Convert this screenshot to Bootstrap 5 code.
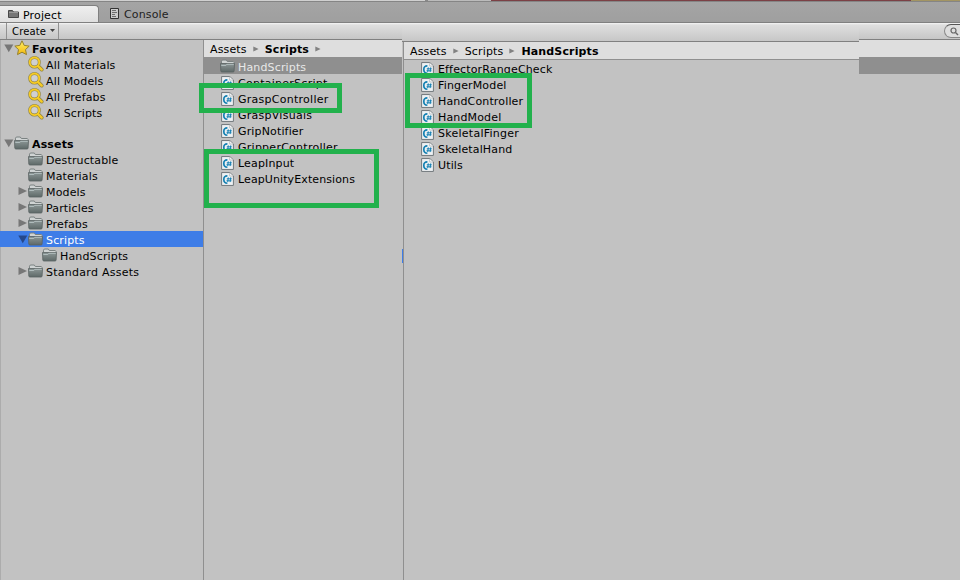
<!DOCTYPE html>
<html lang="en">
<head>
<meta charset="utf-8">
<title>Project</title>
<link href="https://cdn.jsdelivr.net/npm/bootstrap@5.3.0/dist/css/bootstrap.min.css" rel="stylesheet">
<style>
body{width:960px;height:580px;background:#c2c2c2;font:11px/16px "DejaVu Sans",sans-serif;color:#000;letter-spacing:.15px}
svg{flex:none;display:block}
.wide{letter-spacing:.26px}
.tabs{height:23px;background:linear-gradient(#a5a5a5,#9f9f9f);border-bottom:1px solid #808080}
.strip{flex:none;height:2px;border-bottom:1px solid #858585;background:linear-gradient(90deg,#d0d0d0 0 425px,#888 425px 428px,#bbb 428px 491px,#7b4045 491px 911px,#a39563 911px)}
.tab-on{width:99px;height:17px;background:linear-gradient(#efefef,#dfdfdf);border:1px solid #808080;border-width:1px 1px 0 0;border-radius:0 4px 0 0;margin-top:3px}
.tab-on span{padding-top:3px}
.tools{height:17px;background:linear-gradient(#f5f5f5,#dedede 2px,#c6c6c6);border-bottom:1px solid #808080}
.create{margin-left:6px;width:53px;border:1px solid #919191;border-width:0 1px;font-size:10px;padding:1px 3px 0 5px;letter-spacing:.15px}
.create svg{margin-top:5px}
.search{width:30px;height:14px;margin:1px -14px 0 0;border:1px solid #888;border-top-color:#555;border-radius:8px;background:#dedede;padding:2px 5px}
.tree{width:204px;border-right:1px solid #8f8f8f;border-left:1px solid #acacac}
.line{height:16px}
.line span{margin-left:2px;padding-top:3px}
.arrow{width:10px}
.l1{padding-left:3px}.l2{padding-left:17px}.l3{padding-left:31px}
.sel{background:#3e7de7;color:#fff;margin-left:-1px;padding-left:18px}
.gap15{height:15px}
.files{width:198px}
.crumb{background:#dedede;height:17px;padding:2px 0 0 6px}
.crumb svg{margin:0 6px 1px 6px}
.head{height:17px;background:#8f8f8f;color:#e8e8e8;padding-left:16px;margin-bottom:1px}
.file{height:16px;padding-left:17px;gap:4px}
.file span{padding-top:2px}
.inset{width:457px;margin-top:-12px;height:552px;background:#c2c2c2}
.inset-top{height:14px;background:linear-gradient(#dadada,#c7c7c7);border-bottom:1px solid #808080}
.inset-body{margin-left:1px;border-left:1px solid #8f8f8f;height:538px}
.inset .crumb{height:18px;border-bottom:1px solid #8f8f8f}
.mark-box{position:absolute;border:5px solid #22b14c}
.m1{left:199px;top:83px;width:143px;height:30px}
.m2{left:204px;top:149px;width:175px;height:59px}
.m3{left:405px;top:73px;width:127px;height:55px}
.tick{position:absolute;left:402px;top:249px;width:1px;height:14px;background:#3e7de7}
</style>
<script src="https://cdn.jsdelivr.net/npm/bootstrap@5.3.0/dist/js/bootstrap.bundle.min.js"></script>
</head>
<body class="position-relative overflow-hidden text-nowrap">
<svg width="0" height="0" class="position-absolute">
<defs>
<linearGradient id="fg" x2="0" y2="1"><stop stop-color="#8d9797"/><stop offset="1" stop-color="#5e6968"/></linearGradient>
<linearGradient id="sg" x2="0" y2="1"><stop stop-color="#fff06a"/><stop offset="1" stop-color="#f3b80c"/></linearGradient>
<symbol id="folder" viewBox="0 0 16 16"><path d="M1.5 5V3.2L2.3 2h4l1 1.5h6l.8 1V6" fill="#d0d4d4" stroke="#7b8282"/><path d="M.5 5.5h14l-.4 7.5q-.1 1-1 1H1.9q-1 0-1.1-1z" fill="url(#fg)" stroke="#596262" stroke-width=".8"/><path d="M1.3 7.5h4.5l1-1.2h7" fill="none" stroke="#bdc9ca" stroke-width=".8"/></symbol>
<symbol id="cs" viewBox="0 0 13 15" preserveAspectRatio="none"><path d="M.6.6h8.2l3.6 3.6v10.2H.6z" fill="#eef1f3" stroke="#6f7579"/><path d="M8.7 1v3.3H12" fill="#fff" stroke="#a7acb0" stroke-width=".7"/><path d="M6.4 4.2Q2.8 4.1 2.8 8t3.6 4" fill="none" stroke="#1480b2" stroke-width="1.7"/><path d="M7.3 5.8l-.6 5M9.7 5.8l-.6 5M5.8 7.3h5M5.5 9.4h5" stroke="#1480b2" fill="none"/></symbol>
<symbol id="mag" viewBox="0 0 16 16"><circle cx="6.5" cy="6.3" r="4.8" fill="#d9d9d9" fill-opacity=".6" stroke="#8f8446" stroke-width="3"/><path d="M10.3 10.2l3.4 3.4" stroke="#8f8446" stroke-width="3.8" stroke-linecap="round"/><circle cx="6.5" cy="6.3" r="4.8" fill="none" stroke="#f6cb25" stroke-width="1.9"/><path d="M10 10l3.7 3.6" stroke="#f6cb25" stroke-width="2.4" stroke-linecap="round"/></symbol>
<symbol id="star" viewBox="0 0 16 16"><path d="M8 .8l2.2 4.6 5 .7-3.7 3.5 1 5L8 12.2l-4.5 2.4 1-5L.8 6.1l5-.7z" fill="url(#sg)" stroke="#96812c" stroke-linejoin="round"/></symbol>
<symbol id="down" viewBox="0 0 10 10"><path d="M.3 1.5h9L4.8 9.3z"/></symbol>
<symbol id="right" viewBox="0 0 10 10"><path d="M.5 1v8L9 5z"/></symbol>
<symbol id="sep" viewBox="0 0 6 6"><path d="M.3.4v5.2L5.6 3z" fill="#828282"/></symbol>
</defs></svg>
<header>
<div class="tabs d-flex flex-column"><div class="strip"></div>
<div class="d-flex align-items-start">
<div class="tab-on d-flex align-items-center ps-2"><svg width="11" height="10" viewBox="0 0 11 10"><path d="M.5 8.5v-7h4l1 1.5h5v5.5z" fill="#777" stroke="#484848"/><path d="M1 3.5h9" stroke="#999"/></svg><span class="ms-1">Project</span></div>
<div class="d-flex align-items-start" style="margin-left:11px;color:#222;padding-top:2px"><svg style="margin-top:4px" width="9" height="11" viewBox="0 0 9 11"><path d="M.5.5h8v10h-8z" fill="#ccc" stroke="#333"/><path d="M2 2.5h4M2 4.5h5M2 6.5h3M2 8.5h4" stroke="#555" stroke-width=".8"/></svg><span style="margin-left:5px;padding-top:3px">Console</span></div>
</div></div>
<div class="tools d-flex justify-content-between"><div class="create d-flex justify-content-between"><span>Create</span><svg width="5" height="4"><path d="M0 0h5L2.5 3z" fill="#444"/></svg></div>
<div class="search"><svg width="9" height="9" viewBox="0 0 9 9"><circle cx="3.5" cy="3.5" r="2.5" fill="none" stroke="#666" stroke-width="1.2"/><path d="M5.5 5.5L8 8" stroke="#666" stroke-width="1.4"/></svg></div></div>
</header>
<main class="d-flex" style="height:540px">
<nav class="tree flex-shrink-0">
<div class="line l1 d-flex align-items-center fw-bold"><svg class="arrow" height="10" fill="#777"><use href="#down"/></svg><svg width="16" height="16"><use href="#star"/></svg><span style="letter-spacing:.45px">Favorites</span></div>
<div class="line l2 d-flex align-items-center"><i class="arrow"></i><svg width="16" height="16"><use href="#mag"/></svg><span>All Materials</span></div>
<div class="line l2 d-flex align-items-center"><i class="arrow"></i><svg width="16" height="16"><use href="#mag"/></svg><span>All Models</span></div>
<div class="line l2 d-flex align-items-center"><i class="arrow"></i><svg width="16" height="16"><use href="#mag"/></svg><span>All Prefabs</span></div>
<div class="line l2 d-flex align-items-center"><i class="arrow"></i><svg width="16" height="16"><use href="#mag"/></svg><span>All Scripts</span></div>
<div class="gap15"></div>
<div class="line l1 d-flex align-items-center fw-bold"><svg class="arrow" height="10" fill="#777"><use href="#down"/></svg><svg width="16" height="16"><use href="#folder"/></svg><span>Assets</span></div>
<div class="line l2 d-flex align-items-center"><i class="arrow"></i><svg width="16" height="16"><use href="#folder"/></svg><span>Destructable</span></div>
<div class="line l2 d-flex align-items-center"><i class="arrow"></i><svg width="16" height="16"><use href="#folder"/></svg><span>Materials</span></div>
<div class="line l2 d-flex align-items-center"><svg class="arrow" height="10" fill="#777"><use href="#right"/></svg><svg width="16" height="16"><use href="#folder"/></svg><span>Models</span></div>
<div class="line l2 d-flex align-items-center"><svg class="arrow" height="10" fill="#777"><use href="#right"/></svg><svg width="16" height="16"><use href="#folder"/></svg><span>Particles</span></div>
<div class="line l2 d-flex align-items-center"><svg class="arrow" height="10" fill="#777"><use href="#right"/></svg><svg width="16" height="16"><use href="#folder"/></svg><span>Prefabs</span></div>
<div class="line l2 sel d-flex align-items-center"><svg class="arrow" height="10" fill="#26488a"><use href="#down"/></svg><svg width="16" height="16"><use href="#folder"/></svg><span>Scripts</span></div>
<div class="line l3 d-flex align-items-center"><i class="arrow"></i><svg width="16" height="16"><use href="#folder"/></svg><span>HandScripts</span></div>
<div class="line l2 d-flex align-items-center"><svg class="arrow" height="10" fill="#777"><use href="#right"/></svg><svg width="16" height="16"><use href="#folder"/></svg><span class="wide">Standard Assets</span></div>
</nav>
<section class="files flex-shrink-0">
<div class="crumb d-flex align-items-center"><span>Assets</span><svg width="6" height="6"><use href="#sep"/></svg><b>Scripts</b><svg width="6" height="6"><use href="#sep"/></svg></div>
<div class="head d-flex align-items-center"><svg width="16" height="16"><use href="#folder"/></svg><span class="pt-1" style="margin-left:2px">HandScripts</span></div>
<div class="file d-flex align-items-center"><svg width="13" height="14"><use href="#cs"/></svg><span class="wide">ContainerScript</span></div>
<div class="file d-flex align-items-center"><svg width="13" height="14"><use href="#cs"/></svg><span class="wide">GraspController</span></div>
<div class="file d-flex align-items-center"><svg width="13" height="14"><use href="#cs"/></svg><span class="wide">GraspVisuals</span></div>
<div class="file d-flex align-items-center"><svg width="13" height="14"><use href="#cs"/></svg><span>GripNotifier</span></div>
<div class="file d-flex align-items-center"><svg width="13" height="14"><use href="#cs"/></svg><span class="wide">GripperController</span></div>
<div class="file d-flex align-items-center"><svg width="13" height="14"><use href="#cs"/></svg><span>LeapInput</span></div>
<div class="file d-flex align-items-center"><svg width="13" height="14"><use href="#cs"/></svg><span style="letter-spacing:.1px">LeapUnityExtensions</span></div>
</section>
<section class="inset flex-shrink-0">
<div class="inset-top"></div>
<div class="inset-body">
<div class="crumb d-flex align-items-center"><span>Assets</span><svg width="6" height="6"><use href="#sep"/></svg><span>Scripts</span><svg width="6" height="6"><use href="#sep"/></svg><b>HandScripts</b></div>
<div style="height:1px"></div>
<div class="file d-flex align-items-center"><svg width="13" height="14"><use href="#cs"/></svg><span>EffectorRangeCheck</span></div>
<div class="file d-flex align-items-center"><svg width="13" height="14"><use href="#cs"/></svg><span>FingerModel</span></div>
<div class="file d-flex align-items-center"><svg width="13" height="14"><use href="#cs"/></svg><span>HandController</span></div>
<div class="file d-flex align-items-center"><svg width="13" height="14"><use href="#cs"/></svg><span>HandModel</span></div>
<div class="file d-flex align-items-center"><svg width="13" height="14"><use href="#cs"/></svg><span class="wide">SkeletalFinger</span></div>
<div class="file d-flex align-items-center"><svg width="13" height="14"><use href="#cs"/></svg><span>SkeletalHand</span></div>
<div class="file d-flex align-items-center"><svg width="13" height="14"><use href="#cs"/></svg><span>Utils</span></div>
</div></section>
<section class="flex-fill"><div class="crumb"></div><div class="head"></div></section>
</main>
<div class="mark-box m1"></div><div class="mark-box m2"></div><div class="mark-box m3"></div><div class="tick"></div>
</body>
</html>
